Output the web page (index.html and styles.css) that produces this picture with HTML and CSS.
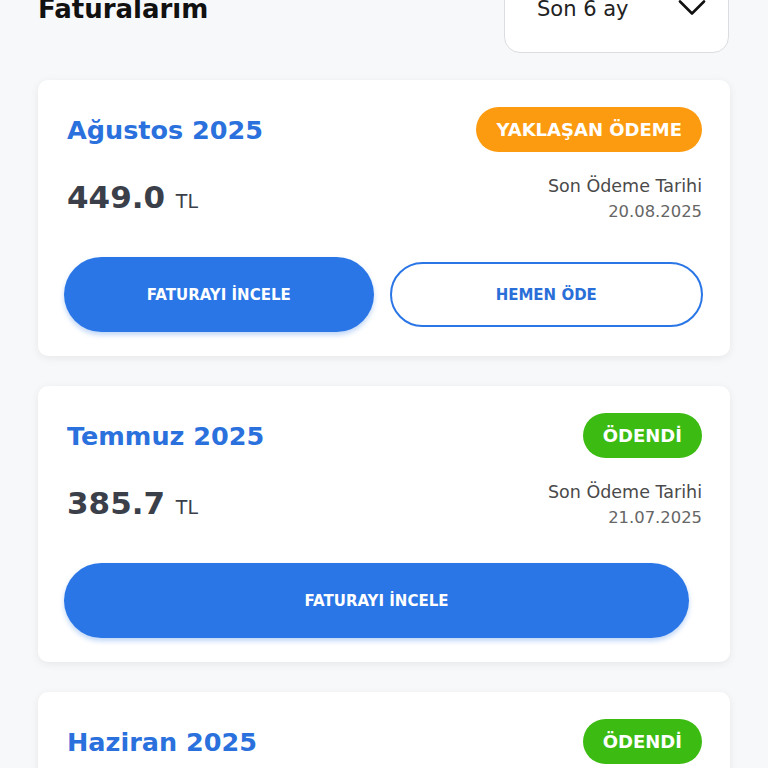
FILE: index.html
```html
<!DOCTYPE html>
<html lang="tr">
<head>
    <meta charset="UTF-8">
    <title>Faturalarım</title>
    <link rel="stylesheet" href="styles.css">
</head>
<body>
    <div class="page">
        <div class="topBar">
            <h1 class="pageTitle">Faturalarım</h1>
            <div class="periodSelect">
                <span>Son 6 ay</span>
                <svg width="28" height="18" viewBox="0 0 28 18"><path d="M2 2.5 L14 14.5 L26 2.5" fill="none" stroke="#111" stroke-width="2.6" stroke-linecap="round" stroke-linejoin="round"/></svg>
            </div>
        </div>

        <div class="billCard">
            <div class="billHead">
                <h2 class="billMonth">Ağustos 2025</h2>
                <span class="badge pending">YAKLAŞAN ÖDEME</span>
            </div>
            <div class="billInfo">
                <p class="amount">449.0 <small>TL</small></p>
                <div class="dueDate">
                    <p class="dueLabel">Son Ödeme Tarihi</p>
                    <p class="dueValue">20.08.2025</p>
                </div>
            </div>
            <div class="billActions">
                <button class="btn btnFill">FATURAYI İNCELE</button>
                <button class="btn btnLine">HEMEN ÖDE</button>
            </div>
        </div>

        <div class="billCard">
            <div class="billHead">
                <h2 class="billMonth">Temmuz 2025</h2>
                <span class="badge paid">ÖDENDİ</span>
            </div>
            <div class="billInfo">
                <p class="amount">385.7 <small>TL</small></p>
                <div class="dueDate">
                    <p class="dueLabel">Son Ödeme Tarihi</p>
                    <p class="dueValue">21.07.2025</p>
                </div>
            </div>
            <div class="billActions single">
                <button class="btn btnFill">FATURAYI İNCELE</button>
            </div>
        </div>

        <div class="billCard">
            <div class="billHead">
                <h2 class="billMonth">Haziran 2025</h2>
                <span class="badge paid">ÖDENDİ</span>
            </div>
            <div class="billInfo">
                <p class="amount">312.4 <small>TL</small></p>
                <div class="dueDate">
                    <p class="dueLabel">Son Ödeme Tarihi</p>
                    <p class="dueValue">20.06.2025</p>
                </div>
            </div>
        </div>
    </div>
</body>
</html>
```
FILE: styles.css
```css
body{margin:0;background:#f7f8fa;font-family:"DejaVu Sans","Noto Sans",sans-serif;}
h1,h2,p{margin:0;}

.page{
    padding:0 38px;
    margin-top:-40px;
}

/* başlık ve dönem seçimi */
.topBar{
    display:flex;
    justify-content:space-between;
    align-items:flex-start;
    margin-bottom:27px;
}
.pageTitle{
    font-size:26px;
    line-height:30px;
    font-weight:700;
    color:#111;
    padding-top:34px;
}
.periodSelect{
    width:225px;
    height:93px;
    box-sizing:border-box;
    margin-right:1px;
    background:#fff;
    border:1px solid #dcdde0;
    border-radius:16px;
    display:flex;
    justify-content:space-between;
    align-items:flex-start;
    padding:35px 22px 0 32px;
    font-size:21px;
    line-height:26px;
    color:#222;
}
.periodSelect svg{margin-top:3px;}

/* fatura kartı */
.billCard{
    background:#fff;
    border-radius:10px;
    box-shadow:0 2px 8px rgba(0,0,0,0.07);
    padding:27px 28px 24px 29px;
    margin-bottom:30px;
}
.billHead{
    display:flex;
    justify-content:space-between;
    align-items:center;
}
.billMonth{
    font-size:25.5px;
    line-height:30px;
    font-weight:700;
    color:#2b71dd;
}
.badge{
    height:45px;
    line-height:45px;
    padding:0 20px;
    border-radius:23px;
    color:#fff;
    font-size:18px;
    font-weight:700;
}
.badge.pending{background:#fd9b10;}
.badge.paid{background:#3cbc13;}

.billInfo{
    display:flex;
    justify-content:space-between;
    margin-top:23px;
}
.amount{
    font-size:31px;
    line-height:38px;
    font-weight:700;
    color:#3a3f4a;
    padding-top:3px;
}
.amount small{
    font-size:19px;
    font-weight:400;
}
.dueDate{text-align:right;}
.dueLabel{
    font-size:17.5px;
    line-height:22px;
    color:#4a4a4a;
}
.dueValue{
    font-size:16.4px;
    line-height:20px;
    color:#666;
    margin-top:5px;
}

/* butonlar */
.billActions{
    display:flex;
    gap:16px;
    align-items:center;
    margin:35px -1px 0 -3px;
}
.billActions.single{margin-right:13px;}
.btn{
    flex:1;
    border-radius:38px;
    font-family:inherit;
    font-size:15px;
    font-weight:700;
    cursor:pointer;
}
.btnFill{
    height:75px;
    background:#2a76e6;
    color:#fff;
    border:none;
    box-shadow:0 3px 5px rgba(42,118,230,0.3);
}
.btnLine{
    height:65px;
    background:#fff;
    color:#2a6fd8;
    border:2px solid #2a76e6;
}
```
